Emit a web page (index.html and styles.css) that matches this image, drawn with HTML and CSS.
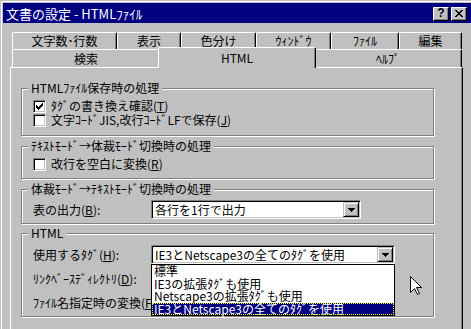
FILE: index.html
```html
<!DOCTYPE html>
<html lang="ja">
<head>
    <meta charset="UTF-8">
    <title>文書の設定 - HTMLﾌｧｲﾙ</title>
    <link rel="stylesheet" href="styles.css">
</head>
<body>
    <div class="window">
        <div class="titlebar">
            <span class="title-text">文書の設定 - HTMLﾌｧｲﾙ</span>
            <span class="cap-btn help-btn">?</span>
            <span class="cap-btn close-btn">
                <svg width="8" height="7" viewBox="0 0 8 7"><path d="M0 0h2v1h-2zM6 0h2v1h-2zM1 1h2v1h-2zM5 1h2v1h-2zM2 2h4v1h-4zM3 3h2v1h-2zM2 4h4v1h-4zM1 5h2v1h-2zM5 5h2v1h-2zM0 6h2v1h-2zM6 6h2v1h-2z" fill="#000"/></svg>
            </span>
        </div>

        <div class="client">
            <div class="tab-row back">
                <div class="tab" style="width: 105px">文字数･行数</div>
                <div class="tab" style="width: 64px">表示</div>
                <div class="tab" style="width: 75px">色分け</div>
                <div class="tab" style="width: 75px">ｳｨﾝﾄﾞｳ</div>
                <div class="tab" style="width: 68px">ﾌｧｲﾙ</div>
                <div class="tab" style="width: 63px">編集</div>
            </div>
            <div class="tab-row front">
                <div class="tab" style="width: 148px">検索</div>
                <div class="tab active" style="width: 158px">HTML</div>
                <div class="tab" style="width: 148px">ﾍﾙﾌﾟ</div>
            </div>

            <div class="panel">
                <div class="group g-save">
                    <div class="group-title">HTMLﾌｧｲﾙ保存時の処理</div>
                    <div class="group-body">
                        <div class="check-row">
                            <span class="checkbox">
                                <svg width="7" height="7" viewBox="0 0 7 7"><path d="M0 2h1v1h1v1h1v-1h1v-1h1v-1h1v-1h1v3h-1v1h-1v1h-1v1h-1v1h-1v-1h-1v-1h-1z" fill="#000"/></svg>
                            </span>
                            <span>ﾀｸﾞの書き換え確認(<u>T</u>)</span>
                        </div>
                        <div class="check-row">
                            <span class="checkbox"></span>
                            <span>文字ｺｰﾄﾞJIS,改行ｺｰﾄﾞLFで保存(<u>J</u>)</span>
                        </div>
                    </div>
                </div>

                <div class="group g-text">
                    <div class="group-title">ﾃｷｽﾄﾓｰﾄﾞ→体裁ﾓｰﾄﾞ切換時の処理</div>
                    <div class="group-body">
                        <div class="check-row">
                            <span class="checkbox"></span>
                            <span>改行を空白に変換(<u>R</u>)</span>
                        </div>
                    </div>
                </div>

                <div class="group g-layout">
                    <div class="group-title">体裁ﾓｰﾄﾞ→ﾃｷｽﾄﾓｰﾄﾞ切換時の処理</div>
                    <div class="group-body tight">
                        <div class="field-row">
                            <span class="field-label">表の出力(<u>B</u>):</span>
                            <div class="combo" style="width: 210px">
                                <span class="combo-value">各行を1行で出力</span>
                                <span class="drop-btn">
                                    <svg width="7" height="4" viewBox="0 0 7 4"><path d="M0 0h7v1h-1v1h-1v1h-1v1h-1v-1h-1v-1h-1v-1h-1z" fill="#000"/></svg>
                                </span>
                            </div>
                        </div>
                    </div>
                </div>

                <div class="group g-html">
                    <div class="group-title">HTML</div>
                    <div class="group-body">
                        <div class="field-row">
                            <span class="field-label">使用するﾀｸﾞ(<u>H</u>):</span>
                            <div class="combo" style="width: 244px">
                                <span class="combo-value">IE3とNetscape3の全てのﾀｸﾞを使用</span>
                                <span class="drop-btn">
                                    <svg width="7" height="4" viewBox="0 0 7 4"><path d="M0 0h7v1h-1v1h-1v1h-1v1h-1v-1h-1v-1h-1v-1h-1z" fill="#000"/></svg>
                                </span>
                                <div class="combo-list">
                                    <div class="list-item">標準</div>
                                    <div class="list-item">IE3の拡張ﾀｸﾞも使用</div>
                                    <div class="list-item">Netscape3の拡張ﾀｸﾞも使用</div>
                                    <div class="list-item selected">IE3とNetscape3の全てのﾀｸﾞを使用</div>
                                </div>
                            </div>
                        </div>
                        <div class="field-row">
                            <span class="field-label">ﾘﾝｸﾍﾞｰｽﾃﾞｨﾚｸﾄﾘ(<u>D</u>):</span>
                            <div class="combo" style="width: 244px"></div>
                        </div>
                        <div class="field-row">
                            <span class="field-label">ﾌｧｲﾙ名指定時の変換(<u>F</u>):</span>
                            <div class="combo" style="width: 244px"></div>
                        </div>
                    </div>
                </div>
            </div>
        </div>
    </div>

    <svg class="cursor" width="13" height="20" viewBox="0 0 13 20">
        <path d="M0.5 0.5V16.5L4.5 12.5L7.5 18.5L9.5 17.5L6.5 11.5H11.5Z" fill="#fff" stroke="#000" stroke-width="1"/>
    </svg>
</body>
</html>
```

FILE: styles.css
```css
:root {
    --face: #c0c0c0;
    --light: #ffffff;
    --shadow: #808080;
    --dark: #000000;
    --navy: #000080;
    --font: "Noto Sans CJK JP", "Noto Sans", sans-serif;
}

* {
    box-sizing: border-box;
    margin: 0;
    padding: 0;
}

html,
body {
    width: 471px;
    height: 329px;
    overflow: hidden;
}

body {
    background: var(--face);
    color: var(--dark);
    font-family: var(--font);
    font-size: 12px;
    line-height: 12px;
}

u {
    text-decoration-thickness: 1px;
    text-underline-offset: 1px;
}

.window {
    height: 329px;
    padding: 3px 0 0 3px;
    box-shadow: inset 1px 1px 0 var(--face), inset 2px 2px 0 var(--light);
}

.titlebar {
    display: flex;
    align-items: center;
    height: 20px;
    padding-left: 3px;
    background: var(--navy);
    color: var(--light);
    font-size: 13px;
    line-height: 13px;
}

.title-text {
    flex: 1;
}

.cap-btn {
    display: flex;
    align-items: center;
    justify-content: center;
    width: 16px;
    height: 14px;
    margin-top: 1px;
    background: var(--face);
    border: 1px solid;
    border-color: var(--light) var(--dark) var(--dark) var(--light);
    box-shadow: inset -1px -1px 0 var(--shadow);
    color: var(--dark);
    font-family: "Liberation Sans", sans-serif;
    font-weight: bold;
    font-size: 12px;
}

.help-btn {
    margin-right: 2px;
}

.close-btn {
    margin-right: 4px;
}

.client {
    padding: 9px 0 0 7px;
}

.tab-row {
    display: flex;
    padding-left: 2px;
}

.tab-row.back {
    height: 17px;
}

.tab-row.front {
    height: 18px;
}

.tab {
    display: flex;
    align-items: center;
    justify-content: center;
    flex: none;
    background: var(--face);
    border-top: 1px solid var(--light);
    border-left: 1px solid var(--light);
    border-right: 1px solid var(--dark);
    border-radius: 2px 2px 0 0;
    box-shadow: inset -1px 0 0 var(--shadow);
    white-space: nowrap;
}

.tab.active {
    position: relative;
    z-index: 2;
    height: 21px;
    margin: -2px -2px 0;
    padding-bottom: 1px;
}

.panel {
    width: 453px;
    height: 262px;
    padding: 20px 0 0 10px;
    border-top: 1px solid var(--light);
    border-left: 1px solid var(--light);
    border-right: 1px solid var(--dark);
    box-shadow: inset -1px 0 0 var(--shadow);
}

.group {
    width: 413px;
    padding: 0 11px 4px;
    border: 1px solid var(--shadow);
    box-shadow: 1px 1px 0 var(--light), inset 1px 1px 0 var(--light);
}

.group + .group {
    margin-top: 10px;
}

.group.g-save {
    padding-bottom: 7px;
}

.group.g-text {
    padding-bottom: 6px;
}

.group.g-html {
    margin-top: 9px;
}

.group-title {
    width: fit-content;
    height: 12px;
    margin: -7px 0 0 -5px;
    padding: 0 3px;
    background: var(--face);
    white-space: nowrap;
}

.group-body {
    margin-top: 6px;
}

.group-body.tight {
    margin-top: 5px;
}

.check-row {
    display: flex;
    align-items: flex-start;
    gap: 5px;
    height: 14px;
}

.checkbox {
    display: flex;
    align-items: center;
    justify-content: center;
    flex: none;
    width: 13px;
    height: 13px;
    background: var(--light);
    border: 1px solid;
    border-color: var(--shadow) var(--light) var(--light) var(--shadow);
    box-shadow: inset 1px 1px 0 var(--dark), inset -1px -1px 0 var(--face);
}

.field-row {
    display: flex;
    align-items: center;
    height: 19px;
}

.field-row + .field-row {
    margin-top: 5px;
}

.field-label {
    flex: none;
    width: 118px;
    white-space: nowrap;
}

.combo {
    position: relative;
    display: flex;
    flex: none;
    height: 19px;
    padding: 1px;
    background: var(--light);
    border: 1px solid;
    border-color: var(--shadow) var(--light) var(--light) var(--shadow);
    box-shadow: inset 1px 1px 0 var(--dark), inset -1px -1px 0 var(--face);
}

.combo-value {
    flex: 1;
    padding-left: 2px;
    line-height: 15px;
    white-space: nowrap;
    overflow: hidden;
}

.drop-btn {
    display: flex;
    align-items: center;
    justify-content: center;
    width: 16px;
    height: 15px;
    background: var(--face);
    border: 1px solid;
    border-color: var(--face) var(--dark) var(--dark) var(--face);
    box-shadow: inset 1px 1px 0 var(--light), inset -1px -1px 0 var(--shadow);
}

.combo-list {
    position: absolute;
    z-index: 3;
    top: calc(100% + 1px);
    left: -1px;
    width: 244px;
    background: var(--light);
    border: 1px solid var(--dark);
}

.list-item {
    height: 12.5px;
    padding-left: 2px;
    line-height: 12.5px;
    white-space: nowrap;
}

.list-item.selected {
    background: var(--navy);
    color: var(--light);
    outline: 1px dotted #ffff00;
    outline-offset: -1px;
}

.cursor {
    position: absolute;
    left: 410px;
    top: 276px;
}
```
